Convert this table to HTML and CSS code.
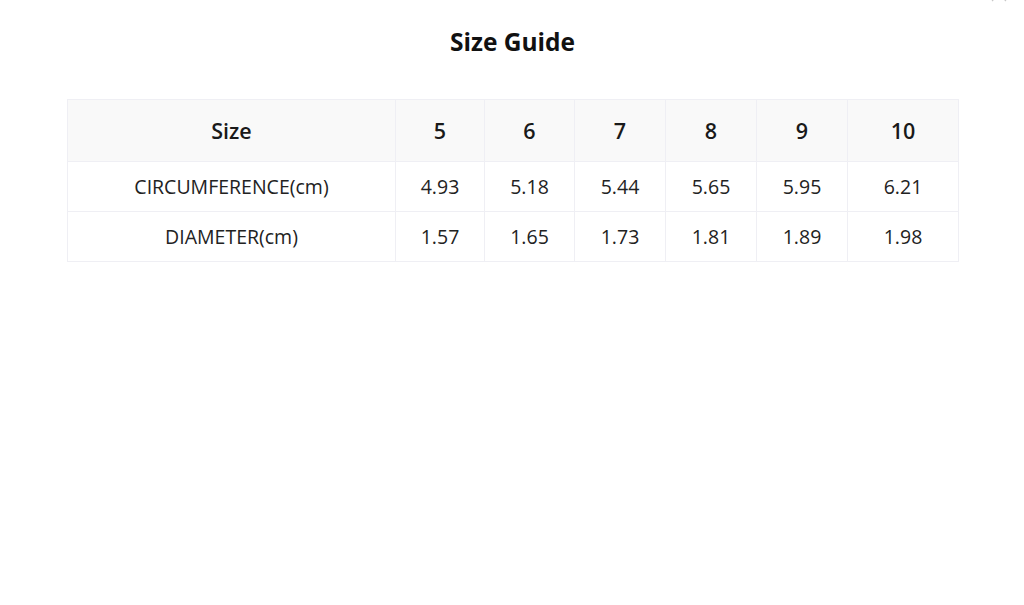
FILE: index.html
```html
<!DOCTYPE html>
<html>
<head>
<meta charset="utf-8">
<link rel="stylesheet" href="styles.css">
</head>
<body>
<div class="modal">
  <span class="close" aria-label="close">
    <svg width="20" height="20" viewBox="0 0 20 20"><path d="M3 3L17 17M17 3L3 17" stroke="#c8c8c8" stroke-width="1.2" fill="none"/></svg>
  </span>
  <h1 class="title">Size Guide</h1>
  <table class="guide">
    <colgroup>
      <col class="c-label"><col class="c-5"><col class="c-6"><col class="c-7"><col class="c-8"><col class="c-9"><col class="c-10">
    </colgroup>
    <thead>
      <tr><th>Size</th><th>5</th><th>6</th><th>7</th><th>8</th><th>9</th><th>10</th></tr>
    </thead>
    <tbody>
      <tr><td>CIRCUMFERENCE(cm)</td><td>4.93</td><td>5.18</td><td>5.44</td><td>5.65</td><td>5.95</td><td>6.21</td></tr>
      <tr><td>DIAMETER(cm)</td><td>1.57</td><td>1.65</td><td>1.73</td><td>1.81</td><td>1.89</td><td>1.98</td></tr>
    </tbody>
  </table>
</div>
</body>
</html>
```
FILE: styles.css
```css
html, body {
  margin: 0;
  padding: 0;
  background: #ffffff;
}
body {
  font-family: "Open Sans", "Noto Sans", sans-serif;
  color: #1a1a1a;
}
.modal {
  position: relative;
  padding: 24px 66px 0 67px;
}
.close {
  position: absolute;
  top: -16px;
  right: 15px;
  display: block;
  width: 20px;
  height: 20px;
}
.title {
  margin: 0;
  text-align: center;
  font-size: 24.5px;
  font-weight: 700;
  line-height: 36px;
  color: #111;
}
.guide {
  margin-top: 39px;
  width: 891px;
  border-collapse: collapse;
  table-layout: fixed;
  border: 1px solid #efeff4;
}
.c-label { width: 328px; }
.c-5 { width: 89px; }
.c-6 { width: 90px; }
.c-7 { width: 91px; }
.c-8 { width: 91px; }
.c-9 { width: 91px; }
.c-10 { width: 111px; }
.guide th, .guide td {
  border: 1px solid #efeff4;
  text-align: center;
  padding: 0;
}
.guide th {
  background: #f9f9f9;
  height: 61px;
  font-size: 21.5px;
  font-weight: 600;
  color: #1a1a1a;
}
.guide td {
  height: 49px;
  font-size: 19.5px;
  font-weight: 400;
  color: #222;
}
```
